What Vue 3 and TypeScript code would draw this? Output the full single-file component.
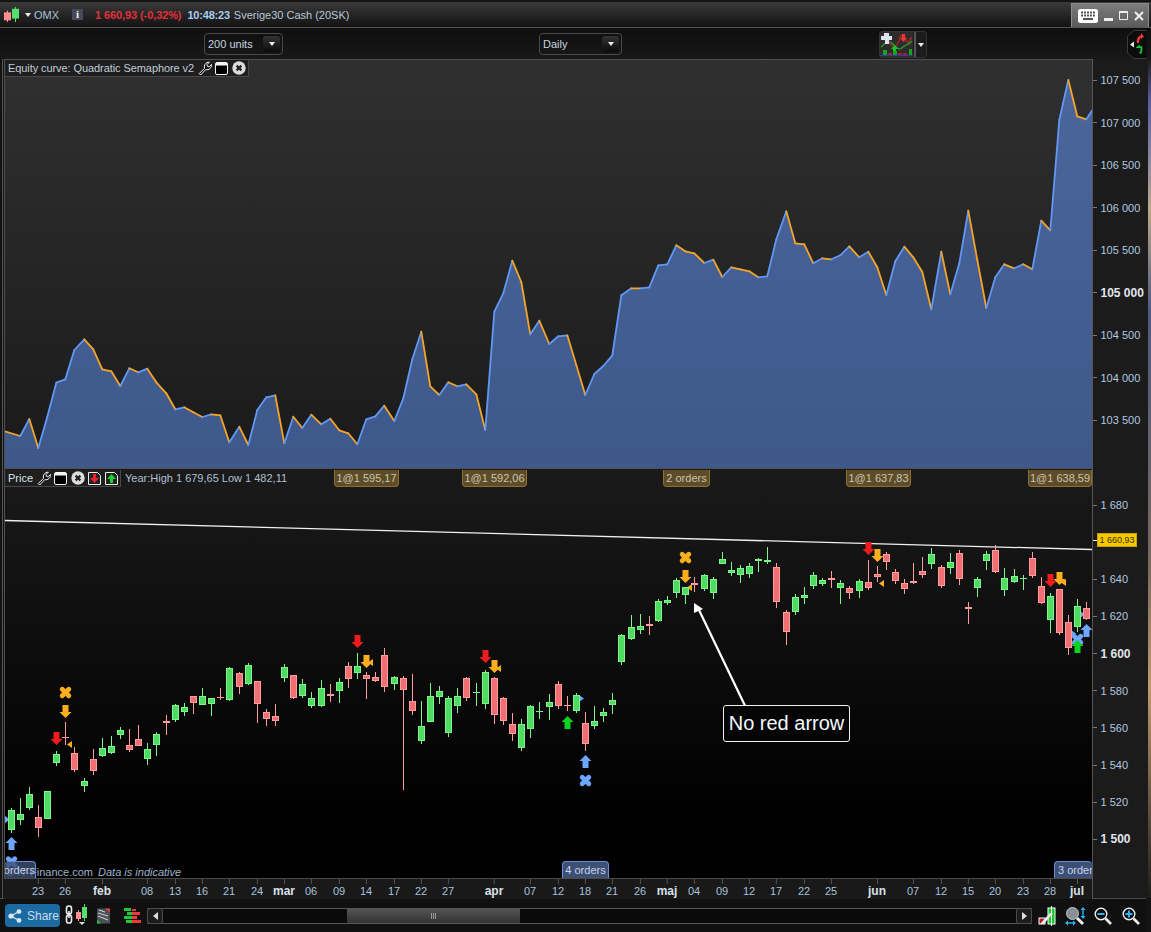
<script setup lang="ts">
type Row = [number, number, number, number, number, number];
// x, green(1)/red(0), wick top, wick bottom, body top, body bottom (3x offsets from base)
const a620: Row[] = [
[11,1,565,638,570,630],[20,1,534,615,582,600],[29,1,501,570,522,564],[38,0,555,651,591,624],[47,1,513,597,513,597],[56,1,393,438,402,429],[65,0,306,375,351,351],[74,0,381,456,399,450],[84,1,474,516,483,498],[93,0,387,465,417,453],[102,1,354,411,384,408],[111,1,348,402,378,399],[120,1,321,357,330,345],[129,0,327,396,375,390],[138,0,315,378,357,378],[147,1,369,435,387,417],[156,1,336,408,342,375],[166,0,285,345,303,309],[175,1,252,306,255,300],[184,1,249,288,261,276],[193,0,228,282,228,249],[202,1,204,255,228,255],[211,1,234,288,234,252],[220,0,204,240,231,234],[229,1,141,243,144,240],[239,0,156,222,159,201],[248,1,129,195,135,192],[257,0,183,309,183,252],[266,0,267,318,276,297],[275,0,252,318,288,303],[284,1,132,186,141,174],[293,0,165,237,165,234],
[302,1,178,234,192,228],[311,1,216,264,234,258],[321,1,180,261,204,258],[330,0,192,246,222,228],[339,1,174,249,186,213],[348,0,126,204,138,177],[357,1,99,177,138,159],[366,0,156,237,165,177],[375,0,156,186,171,183],[384,0,84,216,105,201],[394,1,168,210,171,192],[403,0,168,510,174,210],[412,0,162,285,243,273],[421,1,243,372,318,363],[430,1,189,306,228,306],[439,1,198,252,213,231],[448,1,228,351,234,339],[457,1,204,279,228,258],[466,0,171,243,174,234],[476,1,189,258,216,216],[485,1,150,267,156,252],[494,0,171,312,174,285],[503,0,231,315,234,303],[512,0,279,363,312,342],[521,1,297,393,312,384],[530,1,255,354,258,327],[539,1,246,297,273,273],[549,1,222,300,246,261],[558,0,183,267,192,258],[567,0,228,273,255,258],[576,1,219,279,225,273],[585,0,276,393,309,372],[594,1,258,327,303,318]];
const a530: Row[] = [
[603,1,534,576,546,558],[612,1,489,552,510,525],[621,1,312,405,315,396],[631,1,255,330,291,327],[640,1,252,312,288,300],[649,0,258,315,282,288],[658,1,207,276,213,273],[667,1,198,225,210,219],[676,1,144,204,150,189],[685,1,171,222,171,195],[694,0,141,186,159,166],[704,1,132,183,135,177],[713,1,141,207,147,189],[722,1,66,102,87,102],[731,1,96,138,120,129],[740,1,105,159,114,135],[749,1,99,144,108,132],[758,1,84,126,87,93],[767,1,51,102,90,96],[776,0,99,234,111,216],[786,0,240,345,246,306],[795,1,192,255,201,246],[804,1,171,222,195,204],[813,1,126,177,135,168],[822,1,144,168,150,162],[831,0,123,174,144,150],[840,1,150,222,159,174],[849,0,168,207,174,189],
[859,1,147,204,153,183],[868,0,90,180,156,174],[877,0,108,156,132,141],[886,0,66,120,72,96],[895,0,117,162,126,153],[904,0,147,192,159,177],[913,0,99,162,153,159],[922,0,81,144,123,135],[931,1,54,117,72,102],[941,0,105,174,111,168],[950,1,69,132,96,114],[959,0,60,165,69,147],[968,0,216,282,231,237],[977,1,141,201,147,174],[986,1,63,120,72,93],[995,0,45,129,60,126],[1004,1,114,198,144,180],[1014,1,117,159,138,156],[1023,1,135,180,144,147],[1032,0,66,144,84,138],[1041,0,141,222,168,219],[1050,1,189,309,198,270],[1059,0,177,315,177,309],[1068,0,255,375,276,354],[1077,1,207,306,228,291],[1086,0,216,270,234,267]];
interface Candle { x: number; up: boolean; wt: number; wh: number; bt: number; bh: number }
const toCandle = (base: number) => (r: Row): Candle => {
  const wt = Math.round(base + r[2] / 3), wb = Math.round(base + r[3] / 3);
  const bt = Math.round(base + r[4] / 3), bb = Math.round(base + r[5] / 3);
  return { x: r[0], up: r[1] === 1, wt, wh: wb - wt, bt, bh: Math.max(bb - bt, 1) };
};
const candles: Candle[] = [...a620.map(toCandle(620)), ...a530.map(toCandle(530))];

const eq: number[][] = [[4,431],[20.3,436],[29.3,419],[38.3,448],[47.3,416.7],[56.3,382.7],[65.3,379.3],[74.3,350],[84.3,339.3],[93.3,349.3],[102.3,369.3],[111.3,371.3],[120.3,386],[129.3,368.3],[138.3,372.3],[147.3,368.7],[156.3,382.3],[166.3,393.3],[175.3,409.3],[184.3,407.3],[193.3,412.3],[202.3,417],[211.3,414.3],[220.3,415.3],[229.3,442.3],[239.3,426.7],[248.3,445],[257.3,410],[266.3,397.3],[275.3,395.3],[284.3,443.3],[293.3,416.7],[302.3,428],[311.3,414.7],[321.3,424.3],[330.3,418.7],[339.3,430.3],[348.3,433.3],[357.3,444.3],[366.3,419.3],[375.3,416.3],[384.3,405.7],[394.3,421],[403.3,398.3],[412.3,359.3],[421.3,331.7],[430.3,386.3],[439.3,395],[448.3,382.3],[457.3,386.3],[466.3,384.3],[476.3,394.3],[485.3,430],[494.3,311.7],[503.3,293.3],[512.3,260.7],[521.3,282],[530.3,334.3],[539.3,320.7],[549.3,344],[558.3,336.3],[567.3,335.3],[576.3,365],[585.3,395],[594.3,374],[603.3,366],[612.3,355.3],[621.3,295.3],[631.3,288.3],[640.3,288.3],[649.3,287.3],[658.3,265.3],[667.3,264.3],[676.3,245.3],[685.3,251.3],[694.3,253.3],[704.3,263],[713.3,259.7],[722.3,277],[731.3,267.3],[740.3,269.3],[749.3,271.3],[758.3,277.3],[767.3,276.3],[776.3,239.3],[786.3,211.3],[795.3,243.3],[804.3,244.3],[813.3,263.3],[822.3,258.3],[831.3,259.3],[840.3,255.3],[849.3,246.3],[859.3,257.3],[868.3,251.7],[877.3,267.3],[886.3,295],[895.3,261.3],[904.3,246.7],[913.3,257.3],[922.3,272],[931.3,309.3],[941.3,251.7],[950.3,294.3],[959.3,263.3],[968.3,210.7],[977.3,260],[986.3,308],[995.3,277.3],[1004.3,264.3],[1014.3,268.3],[1023.3,264.3],[1032.3,269.3],[1041.3,220.7],[1050.3,230.3],[1059.3,120],[1068.3,80],[1077.3,116.3],[1086.3,119.3],[1095,106]];
const areaPath = `M4 468 L${eq.map((p) => p.join(" ")).join(" L")} L1095 468 Z`;
const segs = eq.slice(1).map((p, i) => ({ x1: eq[i][0], y1: eq[i][1], x2: p[0], y2: p[1], up: p[1] < eq[i][1] }));

const arrow = (x: number, top: number, dir: number): string => {
  const c = x + 0.5;
  const t = dir > 0 ? top : top + 13;
  const d = dir;
  return [[c-3,t],[c+3,t],[c+3,t+7*d],[c+6,t+7*d],[c,t+13*d],[c-6,t+7*d],[c-3,t+7*d]].map((p) => p.join(",")).join(" ");
};
const RED = "#ee1c1c", ORG = "#ffae1e", BLU = "#6ea6ff", GRN = "#0ad41e";
const arrows = [
  { x: 56, t: 732, d: 1, c: RED }, { x: 65, t: 705, d: 1, c: ORG }, { x: 11, t: 837, d: -1, c: BLU },
  { x: 357, t: 635, d: 1, c: RED }, { x: 366, t: 655, d: 1, c: ORG }, { x: 485, t: 650, d: 1, c: RED },
  { x: 494, t: 660, d: 1, c: ORG }, { x: 567, t: 716, d: -1, c: GRN }, { x: 585, t: 755, d: -1, c: BLU },
  { x: 685, t: 570, d: 1, c: ORG }, { x: 868, t: 542, d: 1, c: RED }, { x: 877, t: 549, d: 1, c: ORG },
  { x: 1050, t: 574, d: 1, c: RED }, { x: 1059, t: 572, d: 1, c: ORG }, { x: 1086, t: 624, d: -1, c: BLU },
].map((a) => ({ pts: arrow(a.x, a.t, a.d), c: a.c }));
const crosses = [
  { x: 65.5, y: 692.5, c: ORG }, { x: 11.5, y: 862, c: BLU }, { x: 585.5, y: 780.5, c: BLU },
  { x: 685.5, y: 557.5, c: ORG }, { x: 1077.5, y: 639.5, c: BLU },
];
const lastArrow = { pts: arrow(1077, 640, -1), c: GRN };
const tri = (x: number, t: number, left: boolean): string =>
  left ? `${x+5},${t} ${x+5},${t+7} ${x},${t+3.5}` : `${x},${t} ${x},${t+7} ${x+5},${t+3.5}`;
const tris = [
  { p: tri(67, 741, true), c: ORG }, { p: tri(5, 816, false), c: BLU }, { p: tri(368, 659, true), c: ORG },
  { p: tri(496, 665, true), c: ORG }, { p: tri(579, 695, false), c: BLU }, { p: tri(687, 584, true), c: ORG },
  { p: tri(879, 580, true), c: ORG }, { p: tri(1061, 579, true), c: ORG }, { p: tri(1080, 611, false), c: BLU },
  { p: tri(1071, 630, false), c: BLU },
];

const eqLabels = [["107 500"],["107 000"],["106 500"],["106 000"],["105 500"],["105 000",1],["104 500"],["104 000"],["103 500"]];
const priceLabels = [["1 680"],["1 660"],["1 640"],["1 620"],["1 600",1],["1 580"],["1 560"],["1 540"],["1 520"],["1 500",1]];
const topTags = [
  { x: 330, w: 65, t: "1@1 595,17" }, { x: 458, w: 65, t: "1@1 592,06" }, { x: 659, w: 47, t: "2 orders" },
  { x: 842, w: 65, t: "1@1 637,83" }, { x: 1024, w: 64, t: "1@1 638,59" },
];
const ticks: [number, string, number?][] = [[38,"23"],[65,"26"],[102,"feb",1],[147,"08"],[175,"13"],[202,"16"],[229,"21"],[257,"24"],[284,"mar",1],[311,"06"],[339,"09"],[366,"14"],[394,"17"],[421,"22"],[448,"27"],[494,"apr",1],[530,"07"],[558,"12"],[585,"18"],[612,"21"],[640,"26"],[667,"maj",1],[694,"04"],[722,"09"],[749,"12"],[776,"17"],[804,"22"],[831,"25"],[877,"jun",1],[913,"07"],[941,"12"],[968,"15"],[995,"20"],[1023,"23"],[1050,"28"],[1077,"jul",1]];
const tickPos = (x: number) => ({ left: `${x - 4}px` });
const tagPos = (x: number, w: number) => ({ left: `${x - 4 + 4}px`, width: `${w}px` });
</script>

<template>
  <div class="app">
    <svg class="defs" width="0" height="0" aria-hidden="true">
      <symbol id="wrench" viewBox="0 0 14 15">
        <path d="M1.2 12.6 L6.6 7.2 C5.6 4.2 7.8 1 11.4 1.2 L9 3.6 L9.4 5.4 L11.2 5.8 L13.5 3.4 C13.8 7 10.8 9.4 7.8 8.6 L2.6 14 Z" fill="#111" stroke="#f2f2f2" stroke-width="1"/>
      </symbol>
      <symbol id="win" viewBox="0 0 13 13">
        <rect x="0.5" y="0.5" width="12" height="12" rx="1.5" fill="#000" stroke="#f4f4f4"/>
        <rect x="1" y="1" width="11" height="2.5" fill="#f4f4f4"/>
      </symbol>
      <symbol id="cls" viewBox="0 0 14 14">
        <circle cx="7" cy="7" r="6.7" fill="#dcdcdc"/>
        <path d="M4.6 4.6 L9.4 9.4 M9.4 4.6 L4.6 9.4" stroke="#222" stroke-width="2.2"/>
      </symbol>
    </svg>

    <header class="topbar">
      <svg class="ic-candle" width="16" height="16" viewBox="0 0 16 18" preserveAspectRatio="none">
        <rect x="0" y="6" width="7" height="9" fill="#ff8f8f"/>
        <rect x="3" y="4" width="1" height="13" fill="#ff8f8f"/>
        <rect x="8" y="2" width="7" height="11" fill="#55e06c"/>
        <rect x="11" y="0" width="1" height="17" fill="#55e06c"/>
      </svg>
      <i class="tri-d top-tri"></i>
      <span class="omx">OMX</span>
      <span class="info">i</span>
      <span class="quote">1 660,93 (-0,32%)</span>
      <span class="clock">10:48:23</span>
      <span class="inst">Sverige30 Cash (20SK)</span>
      <div class="winbtns">
        <svg width="20" height="14" viewBox="0 0 20 14">
          <rect width="20" height="14" rx="2.5" fill="#fff"/>
          <path d="M3 3.5h14M3 6.5h14" stroke="#555" stroke-width="2" stroke-dasharray="2 1"/>
          <rect x="5" y="9" width="10" height="2" fill="#555"/>
        </svg>
        <svg width="9" height="3" viewBox="0 0 9 3" class="wb-min"><rect width="9" height="3" fill="#eee"/></svg>
        <svg width="9" height="9" viewBox="0 0 9 9" class="wb-max"><path d="M.5 1.5h8v7h-8z" fill="none" stroke="#eee"/><rect width="9" height="2" fill="#eee"/></svg>
        <svg width="10" height="10" viewBox="0 0 10 10" class="wb-x"><path d="M1 1L9 9M9 1L1 9" stroke="#eee" stroke-width="2"/></svg>
      </div>
    </header>

    <div class="toolbar">
      <div class="dd dd1"><span>200 units</span><b class="dd-btn"><i class="tri-d"></i></b></div>
      <div class="dd dd2"><span>Daily</span><b class="dd-btn"><i class="tri-d"></i></b></div>
      <div class="strat">
        <svg width="33" height="25" viewBox="0 0 33 25">
          <rect width="33" height="25" fill="#2c2c2c"/>
          <path d="M1 4 C7 6 10 16 15 14 C20 12 19 2 23 3 C27 4 24 17 32 5" fill="none" stroke="#b02222" stroke-width="1.4"/>
          <path d="M1 15 C6 10 9 8 13 12 C17 16 19 19 23 15 C26 12 29 13 32 9" fill="none" stroke="#2e962e" stroke-width="1.4"/>
          <path d="M4 1h5v3h3v4H9v4H5V8H1V4h3z" fill="#dfe3f0"/>
          <path d="M14.5 13l3.5 4h-2v4h-3v-4h-2z" fill="#1cc02a"/>
          <path d="M22 2h3v4h2l-3.500 4-3.500-4h2z" fill="#ee3030"/>
          <path d="M3 18h4v5H3zM13 19h4v4h-4zM29 17h3v6h-3z" fill="#12a51c"/>
          <path d="M8 21h4v2H8zM18 21h4v2h-4zM23 21h4v2h-4z" fill="#b01a30"/>
          <rect y="23" width="33" height="1" fill="#2a3ab0"/>
        </svg>
        <b class="strat-btn"><i class="tri-d"></i></b>
      </div>
      <div class="toggle">
        <svg width="20" height="29" viewBox="0 0 20 29">
          <path d="M19.500 .5H7L.5 6v17L7 28.500h12.500" fill="#0c0c0c" stroke="#3c3c3c"/>
          <path d="M7 11.500v6l-4-3z" fill="#eee"/>
          <path d="M11 13C10 9 12 7 15 5V3l3 3.500L15 9V7.500C13.500 9 13 11 13 13z" fill="#ee3b3b" transform="translate(-1 0)"/>
          <path d="M12 16 C13 20 12 22 11 24 L9 23 C11 21 11 19 10 17z" fill="#14c82c" transform="translate(3 0)"/>
          <path d="M11 14l3.500 3h-7z" fill="#14c82c" transform="translate(1 1)"/>
        </svg>
      </div>
    </div>

    <div class="main">
      <div class="gutter"></div>
      <div class="panels">
        <section class="panel">
          <svg class="chart" width="1088" height="410" viewBox="4 59 1088 410">
            <defs>
              <linearGradient id="eqbg" x1="0" y1="0" x2="0" y2="1"><stop offset="0" stop-color="#303030"/><stop offset="1" stop-color="#1a1a1a"/></linearGradient>
              <linearGradient id="eqfill" gradientUnits="userSpaceOnUse" x1="0" y1="80" x2="0" y2="468"><stop offset="0" stop-color="#4b669c"/><stop offset="1" stop-color="#3e588b"/></linearGradient>
            </defs>
            <rect x="4" y="59" width="1088" height="410" fill="url(#eqbg)"/>
            <path :d="areaPath" fill="url(#eqfill)"/>
            <line v-for="(s, i) in segs" :key="i" :x1="s.x1" :y1="s.y1" :x2="s.x2" :y2="s.y2" :stroke="s.up ? '#6198f4' : '#f4a526'" stroke-width="1.800" stroke-linecap="round"/>
            <path d="M4 59.500H1092M4.500 59V469M4 468.500H1092" stroke="#505050" fill="none"/>
          </svg>
          <div class="legend eq-leg">
            <span>Equity curve: Quadratic Semaphore v2</span>
            <svg class="lg-ic" width="14" height="15"><use href="#wrench"/></svg>
            <svg class="lg-ic" width="13" height="13"><use href="#win"/></svg>
            <svg class="lg-ic" width="14" height="14"><use href="#cls"/></svg>
          </div>
        </section>

        <section class="panel">
          <svg class="chart" width="1088" height="409" viewBox="4 469 1088 409">
            <defs>
              <linearGradient id="pbg" x1="0" y1="0" x2="0" y2="1"><stop offset="0" stop-color="#1a1a1a"/><stop offset=".85" stop-color="#000"/></linearGradient>
            </defs>
            <rect x="4" y="469" width="1088" height="409" fill="url(#pbg)"/>
            <path d="M4.500 469V878" stroke="#505050"/>
            <line x1="5" y1="520.500" x2="1092" y2="549.500" stroke="#f0f0f0" stroke-width="1.300"/>
            <polygon v-for="(t, i) in tris" :key="'t' + i" :points="t.p" :fill="t.c"/>
            <g shape-rendering="crispEdges">
              <g v-for="c in candles" :key="c.x">
                <rect :x="c.x" :y="c.wt" width="1" :height="c.wh" :fill="c.up ? '#7ef58a' : '#ff9d9d'"/>
                <rect :x="c.x - 3 + 0.5" :y="c.bt + 0.5" width="6" :height="c.bh > 1 ? c.bh - 1 : 0" :fill="c.up ? '#4fdb62' : '#ef6f74'" :stroke="c.up ? '#7ef58a' : '#ff9d9d'"/>
                <rect v-if="c.bh === 1" :x="c.x - 3" :y="c.bt" width="7" height="1" :fill="c.up ? '#7ef58a' : '#ff9d9d'"/>
              </g>
            </g>
            <g v-for="(x, i) in crosses" :key="'x' + i" :stroke="x.c" stroke-width="4.800" stroke-linecap="round">
              <line :x1="x.x - 3.300" :y1="x.y - 3.300" :x2="x.x + 3.300" :y2="x.y + 3.300"/>
              <line :x1="x.x + 3.300" :y1="x.y - 3.300" :x2="x.x - 3.300" :y2="x.y + 3.300"/>
            </g>
            <polygon v-for="(a, i) in arrows" :key="'a' + i" :points="a.pts" :fill="a.c"/>
            <polygon :points="lastArrow.pts" :fill="lastArrow.c"/>
            <path d="M749 714 L699 610" stroke="#fff" stroke-width="2.200"/>
            <polygon points="694,603 694,613 703,609" fill="#fff"/>
          </svg>
          <div class="legend pr-leg">
            <span class="pr-name">Price</span>
            <svg class="lg-ic" width="14" height="15"><use href="#wrench"/></svg>
            <svg class="lg-ic" width="13" height="13"><use href="#win"/></svg>
            <svg class="lg-ic" width="14" height="14"><use href="#cls"/></svg>
            <svg class="lg-ic" width="13" height="13" viewBox="0 0 13 13"><path d="M.5.5h9l3 3v9H.5z" fill="#222" stroke="#eee"/><path d="M5 2h3v4h3l-4.500 5L2 6h3z" fill="#e8232a"/></svg>
            <svg class="lg-ic" width="13" height="13" viewBox="0 0 13 13"><path d="M.5.5h9l3 3v9H.5z" fill="#222" stroke="#eee"/><path d="M6.500 2l4.500 5H8v4H5V7H2z" fill="#12d42a"/></svg>
          </div>
          <div class="year">Year:High 1 679,65 Low 1 482,11</div>
          <div v-for="t in topTags" :key="t.t" class="otag" :style="tagPos(t.x, t.w)">{{ t.t }}</div>
          <div class="callout">No red arrow</div>
          <div class="watermark">© IT-Finance.com <em>Data is indicative</em></div>
          <div class="btag b1"><span>orders</span></div>
          <div class="btag b2">4 orders</div>
          <div class="btag b3">3 order</div>
        </section>

        <div class="timeaxis">
          <span v-for="t in ticks" :key="t[0]" class="tick" :class="{ month: t[2] }" :style="tickPos(t[0])">{{ t[1] }}</span>
        </div>
      </div>

      <aside class="axes">
        <div class="yaxis eqy">
          <div v-for="l in eqLabels" :key="l[0]" class="yl" :class="{ strong: l[1] }">{{ l[0] }}</div>
        </div>
        <div class="yaxis pry">
          <div v-for="l in priceLabels" :key="l[0]" class="yl" :class="{ strong: l[1], ghost: l[0] === '1 660' }">{{ l[0] }}</div>
          <div class="lastp">1 660,93</div>
        </div>
      </aside>
      <div class="edge"></div>
    </div>

    <footer class="bottom">
      <div class="share">
        <svg width="14" height="14" viewBox="0 0 14 14">
          <path d="M3 7L11 2.500M3 7L11 11.500" stroke="#d4e4f0" stroke-width="1.300"/>
          <circle cx="3" cy="7" r="2.600" fill="#d4e4f0"/><circle cx="11" cy="2.600" r="2.400" fill="#d4e4f0"/><circle cx="11" cy="11.400" r="2.400" fill="#d4e4f0"/>
        </svg>
        <span>Share</span>
      </div>
      <svg class="bi b-link" width="24" height="22" viewBox="0 0 24 22">
        <rect x="1.500" y="2" width="5" height="8" rx="2.300" fill="none" stroke="#eee" stroke-width="1.600"/>
        <rect x="1.500" y="11" width="5" height="8" rx="2.300" fill="none" stroke="#eee" stroke-width="1.600"/>
        <rect x="3.200" y="7" width="1.600" height="7" fill="#eee"/>
        <rect x="11" y="8" width="5" height="7" fill="#ff8f8f"/><rect x="13" y="6" width="1" height="11" fill="#ff8f8f"/>
        <rect x="17" y="3" width="5" height="11" fill="#55e06c"/><rect x="19" y="0" width="1" height="17" fill="#55e06c"/>
        <path d="M14 18h6l-3 3z" fill="#ddd"/>
      </svg>
      <svg class="bi b-doc" width="14" height="16" viewBox="0 0 14 16">
        <rect width="13" height="15" y="0.500" fill="#4a5058"/>
        <path d="M1 5L11 8M1 8L11 12M2 2L8 4" stroke="#ccc" stroke-width="1.100"/>
        <path d="M8 .5h5v4z" fill="#e84040"/><path d="M0 15.500v-4l4 4z" fill="#2ac040"/>
      </svg>
      <svg class="bi b-ord" width="17" height="15" viewBox="0 0 17 15">
        <path d="M0 0h7v3H0zM3 4h5v3H3zM0 8h8v3H0zM2 12h6v3H2z" fill="#20c838"/>
        <path d="M8 1h4v2H8zM8 4h8v3H8zM8 8h5v3H8zM8 12h9v3H8z" fill="#ee3a3a"/>
      </svg>
      <div class="scroll">
        <b class="sb"><i class="tri-l"></i></b>
        <div class="track"><div class="thumb"><i></i></div></div>
        <b class="sb"><i class="tri-r"></i></b>
      </div>
      <svg class="bi" width="19" height="20" viewBox="0 0 19 20">
        <rect x="10" y="2" width="7" height="16" fill="#12c82a" stroke="#fff"/>
        <rect x="13" y="0" width="1" height="20" fill="#fff"/>
        <rect x="1" y="12" width="6" height="6" fill="#b02020" stroke="#fff"/>
        <path d="M2 18L12 7l3 0-9 11z" fill="#eee"/>
      </svg>
      <svg class="bi b-zf" width="21" height="20" viewBox="0 0 21 20">
        <circle cx="7.500" cy="7.500" r="6" fill="#8a8f96" stroke="#bfc4c8"/>
        <path d="M12 12L18 18" stroke="#eee" stroke-width="3"/>
        <path d="M18 1l2.500 3h-5zM18 13l2.500-3h-5z" fill="#29b6f6"/><rect x="17.300" y="3" width="1.400" height="8" fill="#29b6f6"/>
        <path d="M0 17l3-2.500v5zM11 17l-3-2.500v5z" fill="#29b6f6"/><rect x="2" y="16.300" width="7" height="1.400" fill="#29b6f6"/>
      </svg>
      <svg class="bi b-zm" width="18" height="18" viewBox="0 0 18 18">
        <circle cx="7" cy="7" r="5.800" fill="#0a0a0a" stroke="#eee" stroke-width="1.400"/>
        <path d="M11.500 11.500L17 17" stroke="#eee" stroke-width="2.600"/>
        <rect x="3.500" y="6" width="7" height="2" fill="#29b6f6"/>
      </svg>
      <svg class="bi b-zp" width="18" height="18" viewBox="0 0 18 18">
        <circle cx="7" cy="7" r="5.800" fill="#0a0a0a" stroke="#eee" stroke-width="1.400"/>
        <path d="M11.500 11.500L17 17" stroke="#eee" stroke-width="2.600"/>
        <path d="M3.500 6H6V3.500h2V6h2.500v2H8v2.500H6V8H3.500z" fill="#29b6f6"/>
      </svg>
    </footer>
  </div>
</template>

<style>
html, body { margin: 0; padding: 0; background: #141414; }
</style>

<style scoped>
.app { width: 1151px; height: 932px; overflow: hidden; position: relative; display: flex; flex-direction: column; background: #141414; font: 11px "Liberation Sans", Arial, sans-serif; color: #b8c8d8; }
.defs { position: absolute; }
.topbar { height: 25px; margin-top: 2px; flex: none; display: flex; align-items: center; padding-left: 4px; background: linear-gradient(#3a3a3a, #121212); border-bottom: 1px solid #555; }
.ic-candle { margin-top: 1px; }
.tri-d { display: block; width: 0; height: 0; border: 3.5px solid transparent; border-top: 4px solid #eee; border-bottom: 0; }
.top-tri { margin-left: 5px; margin-top: 1px; }
.omx { margin-left: 3px; color: #a6c2de; }
.info { margin-left: 13px; width: 11px; height: 11px; background: #454b58; color: #eee; font: bold 11px/11px "Liberation Serif", serif; text-align: center; }
.quote { margin-left: 12px; color: #e2303c; font-weight: 700; letter-spacing: -.1px; }
.clock { margin-left: 6px; color: #a8cdf0; font-weight: 700; letter-spacing: -.2px; }
.inst { margin-left: 4px; color: #b8c8d8; }
.winbtns { margin-left: auto; margin-right: 2px; margin-top: 1px; width: 78px; height: 24px; box-sizing: border-box; padding-left: 6px; display: flex; align-items: center; background: linear-gradient(#7c7c7c, #5a5a5a); border: 1px solid #8c8c8c; border-bottom: 0; }
.wb-min { margin-left: 6px; margin-top: 7px; }
.wb-max { margin-left: 6px; }
.wb-x { margin-left: 6px; }
.toolbar { height: 31px; flex: none; display: flex; align-items: center; background: linear-gradient(#0e0e0e, #181818); }
.dd { height: 22px; box-sizing: border-box; display: flex; align-items: center; justify-content: space-between; padding: 0 2px 0 3px; border: 1px solid #4a4a4a; border-radius: 4px; color: #c8d4e0; margin-top: 1px; }
.dd1 { width: 79px; margin-left: 204px; }
.dd2 { width: 83px; margin-left: 256px; }
.dd-btn { width: 17px; height: 16px; display: flex; align-items: center; justify-content: center; background: linear-gradient(#333, #0c0c0c); border-radius: 3px; }
.strat { margin-left: 257px; width: 48px; height: 27px; box-sizing: border-box; padding: 0; display: flex; background: #1c1c1c; border: 1px solid #333; border-radius: 3px; margin-top: 2px; }
.strat-btn { flex: 1; display: flex; align-items: center; justify-content: center; border-left: 2px solid #555; margin-left: 1px; }
.toggle { margin-left: auto; margin-right: 4px; height: 29px; margin-top: 1px; }
.main { display: flex; flex: none; height: 839px; }
.gutter { width: 4px; flex: none; box-sizing: border-box; border-left: 1px solid #141414; position: relative; background: linear-gradient(90deg, #111 0 1px, #555 1px 2px, #141414 2px); }
.panels { width: 1088px; flex: none; display: flex; flex-direction: column; }
.panel { position: relative; }
.chart { display: block; }
.legend { position: absolute; left: 1px; top: 1px; height: 17px; box-sizing: border-box; display: flex; align-items: center; padding-left: 3px; background: #1e1e1e; border-right: 1px solid #484848; border-bottom: 1px solid #484848; color: #c0ccd8; }
.eq-leg { width: 244px; }
.eq-leg span { white-space: nowrap; letter-spacing: -.08px; }
.pr-leg { width: 116px; color: #dde4ec; }
.lg-ic { margin-left: 3.500px; flex: none; }
.year { position: absolute; left: 121px; top: 3px; color: #b0c0d0; }
.otag { position: absolute; top: 1px; height: 17px; box-sizing: border-box; text-align: center; line-height: 16px; white-space: nowrap; overflow: hidden; background: #5e4c28; border: 1px solid #8e7030; border-top: 0; border-radius: 0 0 4px 4px; color: #c8c4b0; }
.callout { position: absolute; left: 719px; top: 236px; width: 127px; height: 37px; box-sizing: border-box; display: flex; align-items: center; justify-content: center; background: #050505; border: 1px solid #f0f0f0; border-radius: 3px; color: #f4f8ff; font-size: 20px; }
.watermark { position: absolute; left: 2px; top: 397px; color: #9fb4cc; white-space: nowrap; }
.watermark em { margin-left: 2px; }
.btag { position: absolute; top: 392px; height: 17px; box-sizing: border-box; line-height: 17px; text-align: center; white-space: nowrap; overflow: hidden; background: rgba(61, 79, 116, .8); border: 1px solid #6a90d0; border-bottom: 0; border-radius: 4px 4px 0 0; color: #c4d4ea; }
.b1 { left: 1px; width: 31px; border-left: 0; display: flex; justify-content: flex-end; }
.b2 { left: 558px; width: 47px; background: #3d4f74; }
.b3 { left: 1050px; width: 38px; border-right: 0; text-align: left; padding-left: 3px; background: #3d4f74; }
.timeaxis { position: relative; height: 21px; flex: none; box-sizing: border-box; border-top: 1px solid #4a4a4a; background: #191919; }
.tick { position: absolute; top: 6px; transform: translateX(-50%); color: #a8c2dc; }
.tick::before { content: ""; position: absolute; left: 50%; top: -6px; width: 1px; height: 5px; background: #555; }
.month { font-weight: 700; font-size: 12px; color: #d8e0e8; top: 5px; }
.month::before { top: -5px; }
.axes { width: 56px; flex: none; border-left: 1px solid #555; box-sizing: border-box; display: flex; flex-direction: column; background: #1b1b1b; }
.yaxis { position: relative; display: flex; flex-direction: column; }
.eqy { height: 410px; }
.pry { height: 429px; padding-top: 17.500px; box-sizing: border-box; }
.yl { flex: none; display: flex; align-items: center; height: 42.500px; color: #b0c8e0; white-space: nowrap; }
.pry .yl { height: 37.150px; }
.yl::before { content: ""; width: 4px; height: 1px; background: #777; margin-right: 3.500px; }
.strong { font-weight: 700; font-size: 12px; color: #e0e6ec; }
.ghost { visibility: hidden; }
.lastp { position: absolute; left: 4px; top: 64px; width: 40px; height: 14px; box-sizing: border-box; border: 1px solid #d0a000; background: #f5c800; color: #3c3000; font-size: 9px; line-height: 12px; text-align: center; white-space: nowrap; }
.lastp::before { content: ""; position: absolute; left: -5px; top: 6px; width: 4px; height: 1px; background: #eee; }
.edge { flex: 1; background: linear-gradient(#1c1c1c 0, #5a5f9c 5%, #8a86a0 12%, #bda98a 18%, #4e5a80 30%, #77695e 60%, #c09a70 75%, #1c1c1c 100%); }
.bottom { flex: 1; display: flex; align-items: center; padding-left: 5px; box-sizing: border-box; border-top: 1px solid #4a4a4a; background: #101010; width: 1146px; }
.share { width: 55px; height: 23px; box-sizing: border-box; padding-left: 3px; display: flex; align-items: center; gap: 5px; border-radius: 4px; background: #1c6aa2; color: #c8dcec; flex: none; font-size: 12px; }
.bi { flex: none; }
.b-link { margin-left: 5px; margin-top: -2px; }
.b-doc { margin-left: 8px; }
.b-ord { margin-left: 13px; }
.scroll { margin-left: 6px; width: 885px; height: 16px; margin-right: 6px; display: flex; flex: none; box-sizing: border-box; border-top: 1px solid #555; border-bottom: 1px solid #555; background: #0a0a0a; }
.sb { width: 16px; box-sizing: border-box; flex: none; display: flex; align-items: center; justify-content: center; background: #1c1c1c; border: 1px solid #4c4c4c; margin-top: -1px; margin-bottom: -1px; border-radius: 3px; }
.tri-l { border: 4px solid transparent; border-right: 5px solid #ddd; border-left: 0; }
.tri-r { border: 4px solid transparent; border-left: 5px solid #ddd; border-right: 0; }
.track { flex: 1; padding-left: 184px; }
.thumb { width: 173px; height: 100%; box-sizing: border-box; background: linear-gradient(#545454, #333); display: flex; align-items: center; justify-content: center; }
.thumb i { width: 5px; height: 6px; background: repeating-linear-gradient(90deg, #999 0 1px, transparent 1px 2px); }
.b-zf { margin-right: 8px; margin-left: 8px; }
.b-zm { margin-right: 10px; }
</style>
